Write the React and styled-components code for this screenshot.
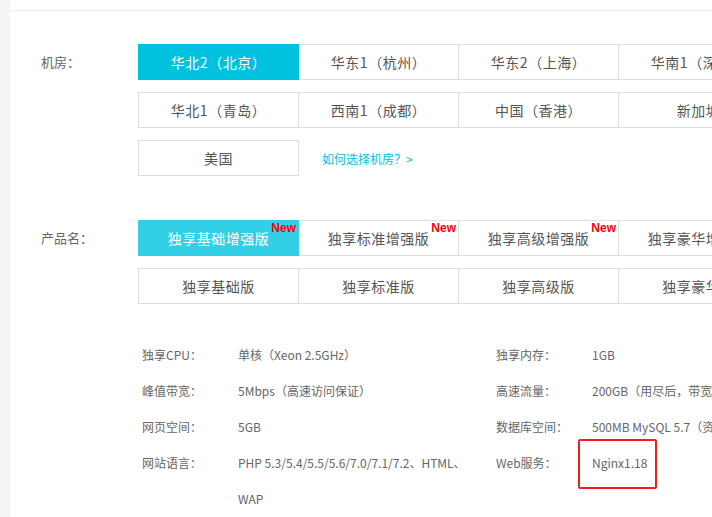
import React from 'react';
import styled, { createGlobalStyle } from 'styled-components';

const Global = createGlobalStyle`
  html, body { margin: 0; background: #f5f5f5; }
  body { font-family: "Microsoft YaHei", "Noto Sans CJK SC", "Liberation Sans", sans-serif; overflow: hidden; }
`;

const Page = styled.div`
  margin-left: 10px;
  background: #fff;
  height: 517px;
  overflow: hidden;
`;

const TopBar = styled.div`
  height: 10px;
  border-bottom: 1px solid #eee;
`;

const Section = styled.div`
  display: flex;
  padding-left: 31px;
  margin-top: ${p => p.$top}px;
`;

const Label = styled.div`
  width: 97px;
  flex-shrink: 0;
  height: 36px;
  line-height: 36px;
  font-size: 13px;
  color: #666;
`;

const Rows = styled.div`
  display: flex;
  flex-direction: column;
  gap: 12px;
  min-width: 0;
`;

const Row = styled.div`
  display: flex;
  align-items: center;
  flex-wrap: nowrap;
`;

const Option = styled.div`
  position: relative;
  flex-shrink: 0;
  width: 159px;
  height: 34px;
  line-height: 34px;
  text-align: center;
  font-size: 14px;
  color: ${p => (p.$active ? '#fff' : '#555')};
  background: ${p => (p.$active ? p.$color : '#fff')};
  border: 1px solid ${p => (p.$active ? p.$color : '#ddd')};
  margin-right: -1px;
  z-index: ${p => (p.$active ? 1 : 0)};
  letter-spacing: 0.5px;
`;

const NewTag = styled.span`
  position: absolute;
  top: 0;
  right: 2px;
  line-height: 14px;
  font-family: "Liberation Sans", Arial, sans-serif;
  font-weight: bold;
  font-size: 12px;
  color: #f00;
  letter-spacing: 0;
`;

const Link = styled.span`
  margin-left: 24px;
  font-size: 12px;
  color: #00c1de;
`;

const Specs = styled.div`
  margin: 32px 0 0 132px;
  display: grid;
  grid-template-columns: 96px 258px 96px 1fr;
  grid-auto-rows: 36px;
  font-size: 12px;
  color: #666;
  align-items: center;
  white-space: nowrap;
`;

const Value = styled.div`
  position: relative;
`;

const Highlight = styled.div`
  position: absolute;
  left: -14px;
  top: -15px;
  width: 75px;
  height: 46px;
  border: 2px solid #f31c1c;
  border-radius: 2px;
`;

const rooms = [
  ['华北2（北京）', '华东1（杭州）', '华东2（上海）', '华南1（深圳）'],
  ['华北1（青岛）', '西南1（成都）', '中国（香港）', '新加坡'],
];

const products = [
  ['独享基础增强版', '独享标准增强版', '独享高级增强版', '独享豪华增强版'],
  ['独享基础版', '独享标准版', '独享高级版', '独享豪华版'],
];

export default function App() {
  return (
    <Page>
      <Global />
      <TopBar />
      <Section $top={33}>
        <Label>机房：</Label>
        <Rows>
          {rooms.map((r, i) => (
            <Row key={i}>
              {r.map((t, j) => (
                <Option key={t} $active={i === 0 && j === 0} $color="#00c1de">{t}</Option>
              ))}
            </Row>
          ))}
          <Row>
            <Option>美国</Option>
            <Link>如何选择机房？&gt;</Link>
          </Row>
        </Rows>
      </Section>
      <Section $top={44}>
        <Label>产品名：</Label>
        <Rows>
          {products.map((r, i) => (
            <Row key={i}>
              {r.map((t, j) => (
                <Option key={t} $active={i === 0 && j === 0} $color="#33cfe6">
                  {t}
                  {i === 0 && j < 3 && <NewTag>New</NewTag>}
                </Option>
              ))}
            </Row>
          ))}
        </Rows>
      </Section>
      <Specs>
        <div>独享CPU：</div><div>单核（Xeon 2.5GHz）</div>
        <div>独享内存：</div><div>1GB</div>
        <div>峰值带宽：</div><div>5Mbps（高速访问保证）</div>
        <div>高速流量：</div><div>200GB（用尽后，带宽降为1Mbps）</div>
        <div>网页空间：</div><div>5GB</div>
        <div>数据库空间：</div><div>500MB MySQL 5.7（资源独享）</div>
        <div>网站语言：</div><div>PHP 5.3/5.4/5.5/5.6/7.0/7.1/7.2、HTML、</div>
        <div>Web服务：</div><Value>Nginx1.18<Highlight /></Value>
        <div></div><div>WAP</div>
      </Specs>
    </Page>
  );
}
